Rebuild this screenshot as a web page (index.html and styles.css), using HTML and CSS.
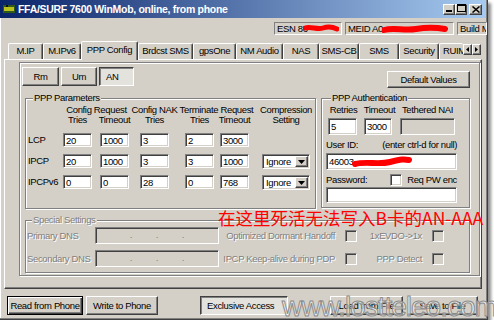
FILE: index.html
```html
<!DOCTYPE html>
<html lang="en">
<head>
  <meta charset="UTF-8" />
  <title>FFA/SURF 7600 WinMob - Service Programming</title>
  <link rel="stylesheet" href="styles.css">
</head>
<body>

<div class="window">
  <!-- Title bar -->
  <div class="titlebar">
    <svg class="app-icon" width="12" height="8" viewBox="0 0 12 8"><rect width="12" height="8" fill="#2d5a1a"/><rect x="1" y="2" width="10" height="4" fill="#b9c21c"/><rect x="3" y="0" width="2" height="2" fill="#111"/></svg>
    <span class="title">FFA/SURF 7600 WinMob, online, from phone</span>
    <div class="caption-btns">
      <span class="cbtn"><svg width="6" height="2"><rect width="6" height="2" fill="#000"/></svg></span>
      <span class="cbtn"><svg width="9" height="8" viewBox="0 0 9 8"><rect x="0.5" y="0.5" width="8" height="7" fill="none" stroke="#000"/><rect width="9" height="2" fill="#000"/></svg></span>
      <span class="cbtn close"><svg width="8" height="7" viewBox="0 0 8 7"><path d="M0.5 0.5L7.5 6.5M7.5 0.5L0.5 6.5" stroke="#000" stroke-width="1.5"/></svg></span>
    </div>
  </div>

  <!-- Phone info -->
  <div class="status">
    <span class="sbox esn">ESN 86
      <svg class="scribble" width="36" height="9" viewBox="0 0 36 9"><path d="M2 4C8 2 14 6 20 4S30 3 34 5" stroke="#f00" stroke-width="5" fill="none" stroke-linecap="round"/></svg>
    </span>
    <span class="sbox meid">MEID A0
      <svg class="scribble" width="66" height="10" viewBox="0 0 66 10"><path d="M2 6C12 3 22 7 34 5S52 3 63 5" stroke="#f00" stroke-width="6" fill="none" stroke-linecap="round"/></svg>
    </span>
    <span class="sbox build">Build M</span>
  </div>

  <!-- Tabs -->
  <div class="tabs">
    <span class="tab w35">M.IP</span>
    <span class="tab w38">M.IPv6</span>
    <span class="tab active">PPP Config</span>
    <span class="tab w55">Brdcst SMS</span>
    <span class="tab w43">gpsOne</span>
    <span class="tab w47">NM Audio</span>
    <span class="tab w36">NAS</span>
    <span class="tab w40">SMS-CB</span>
    <span class="tab w40">SMS</span>
    <span class="tab w40">Security</span>
    <span class="tab cut">RUIM</span>
    <span class="tab-scroll">
      <span class="arrow"><svg width="3" height="5"><path d="M3 0V5L0 2.5Z" fill="#000"/></svg></span>
      <span class="arrow"><svg width="3" height="5"><path d="M0 0V5L3 2.5Z" fill="#000"/></svg></span>
    </span>
  </div>

  <div class="panel">
    <div class="frame">
      <div class="top-row">
        <div class="modes">
          <button class="btn mode">Rm</button>
          <button class="btn mode">Um</button>
          <button class="btn mode down">AN</button>
        </div>
        <button class="btn defaults">Default Values</button>
      </div>

      <div class="groups">
        <fieldset class="group ppp-params">
          <legend>PPP Parameters</legend>
          <div class="param-grid">
            <span></span>
            <span class="hd span2 cfg">Config Request</span>
            <span class="hd">Config NAK</span>
            <span class="hd span2 term">Terminate Request</span>
            <span class="hd wide-hd">Compression</span>

            <span></span>
            <span class="hd">Tries</span>
            <span class="hd">Timeout</span>
            <span class="hd">Tries</span>
            <span class="hd">Tries</span>
            <span class="hd">Timeout</span>
            <span class="hd wide-hd">Setting</span>

            <span class="rowlabel">LCP</span>
            <input class="field" type="text" value="20">
            <input class="field" type="text" value="1000">
            <input class="field" type="text" value="3">
            <input class="field" type="text" value="2">
            <input class="field" type="text" value="3000">
            <span></span>

            <span class="rowlabel">IPCP</span>
            <input class="field" type="text" value="20">
            <input class="field" type="text" value="1000">
            <input class="field" type="text" value="3">
            <input class="field" type="text" value="3">
            <input class="field" type="text" value="1000">
            <span class="combo">Ignore<span class="combo-btn"><svg width="7" height="4"><path d="M0 0H7L3.5 4Z" fill="#000"/></svg></span></span>

            <span class="rowlabel">IPCPv6</span>
            <input class="field" type="text" value="0">
            <input class="field" type="text" value="0">
            <input class="field" type="text" value="28">
            <input class="field" type="text" value="0">
            <input class="field" type="text" value="768">
            <span class="combo">Ignore<span class="combo-btn"><svg width="7" height="4"><path d="M0 0H7L3.5 4Z" fill="#000"/></svg></span></span>
          </div>
        </fieldset>

        <fieldset class="group ppp-auth">
          <legend>PPP Authentication</legend>
          <div class="auth-grid">
            <span class="hd">Retries</span>
            <span class="hd">Timeout</span>
            <span class="hd">Tethered NAI</span>
            <input class="field retries" type="text" value="5">
            <input class="field timeout" type="text" value="3000">
            <input class="field nai" type="text" value="" disabled>
          </div>
          <div class="auth-line user-line">
            <span>User ID:</span>
            <span>(enter ctrl-d for null)</span>
          </div>
          <div class="user-box">
            <input class="field wide" type="text" value="46003">
            <svg class="scribble user-scribble" width="60" height="12" viewBox="0 0 60 12"><path d="M3 8C14 5 26 9 38 6S52 3 57 4" stroke="#f00" stroke-width="6" fill="none" stroke-linecap="round"/></svg>
          </div>
          <div class="auth-line pw-line">
            <span>Password:</span>
            <span class="chk-wrap"><span class="check"></span>Req PW enc</span>
          </div>
          <input class="field wide pw" type="password" value="">
        </fieldset>
      </div>

      <fieldset class="group special">
        <legend>Special Settings</legend>
        <div class="special-grid">
          <span class="dis">Primary DNS</span>
          <span class="field ip"><i>.</i><i>.</i><i>.</i></span>
          <span class="dis right">Optimized Dormant Handoff</span>
          <span class="check off"></span>
          <span class="dis right">1xEVDO-&gt;1x</span>
          <span class="check off"></span>

          <span class="dis">Secondary DNS</span>
          <span class="field ip"><i>.</i><i>.</i><i>.</i></span>
          <span class="dis right">IPCP Keep-alive during PDP</span>
          <span class="check off"></span>
          <span class="dis right">PPP Detect</span>
          <span class="check off"></span>
        </div>
      </fieldset>
    </div>
  </div>

  <div class="bottom">
    <button class="btn default read">Read from Phone</button>
    <button class="btn write">Write to Phone</button>
    <button class="btn down exclusive">Exclusive Access</button>
    <button class="btn load">Load from File</button>
    <button class="btn save">Save to File</button>
  </div>

  <div class="note">在这里死活无法写入B卡的AN-AAA</div>
  <div class="watermark">www.lostteleo.com</div>
</div>

</body>
</html>
```

FILE: styles.css
```css
* { box-sizing: border-box; }
body {
  margin: 0;
  background: #fff;
  font-family: "Liberation Sans", Arial, sans-serif;
  font-size: 9.5px;
  letter-spacing: -0.35px;
  color: #000;
}
.window {
  position: relative;
  width: 488px;
  height: 320px;
  background: #d4d0c8;
  box-shadow: inset -1px -1px #404040, inset -2px -2px #808080, inset 1px 0 #fff, 3px 3px 3px rgba(0,0,0,0.45);
}

/* title bar */
.titlebar {
  height: 18px;
  margin-right: 2px;
  display: flex;
  align-items: center;
  padding-left: 3px;
  background: linear-gradient(to right, #0a246a, #a6caf0);
  color: #fff;
  font-weight: bold;
}
.title {
  margin-left: 3px;
  font-size: 10.5px;
  letter-spacing: -0.3px;
}
.caption-btns {
  margin-left: auto;
  margin-right: 4px;
  display: flex;
}
.cbtn {
  width: 12px;
  height: 11px;
  display: flex;
  align-items: flex-end;
  justify-content: center;
  padding-bottom: 2px;
  background: #d4d0c8;
  border: 1px solid;
  border-color: #fff #404040 #404040 #fff;
  box-shadow: inset -1px -1px #808080;
}
.cbtn.close { margin-left: 2px; width: 13px; align-items: center; padding: 0; }

/* status boxes */
.status {
  display: flex;
  justify-content: flex-end;
  gap: 3px;
  height: 13px;
  margin-top: 4px;
  padding-right: 1px;
}
.sbox {
  position: relative;
  border: 1px solid;
  border-color: #808080 #fff #fff #808080;
  padding: 0 2px;
  line-height: 11px;
  white-space: nowrap;
  overflow: hidden;
}
.esn { width: 68px; }
.meid { width: 109px; }
.build { width: 30px; }
.scribble {
  position: absolute;
  top: 1px;
}
.esn .scribble { left: 28px; }
.meid .scribble { left: 36px; }

/* tabs */
.tabs {
  display: flex;
  align-items: flex-end;
  height: 18px;
  margin-top: 6px;
  padding-left: 8px;
}
.tab {
  height: 16px;
  line-height: 14px;
  text-align: center;
  white-space: nowrap;
  overflow: hidden;
  border-top: 1px solid #fff;
  border-left: 1px solid #fff;
  border-right: 1px solid #404040;
  box-shadow: inset -1px 0 #808080;
  border-radius: 2px 2px 0 0;
}
.tab.active {
  position: relative;
  z-index: 1;
  width: 57px;
  height: 19px;
  line-height: 16px;
  margin-bottom: -1px;
  background: #d4d0c8;
}
.w35 { width: 35px; }
.w36 { width: 36px; }
.w38 { width: 38px; }
.w40 { width: 40px; }
.w43 { width: 43px; }
.w47 { width: 47px; }
.w55 { width: 55px; }
.tab.cut {
  width: 24px;
  text-align: left;
  padding-left: 3px;
  border-right: none;
  box-shadow: none;
}
.tab-scroll {
  display: flex;
  align-self: flex-start;
  margin-top: 3px;
}
.arrow {
  width: 9px;
  height: 11px;
  display: flex;
  align-items: center;
  justify-content: center;
  border: 1px solid;
  border-color: #fff #404040 #404040 #fff;
  box-shadow: inset -1px -1px #808080;
}

/* page */
.panel {
  width: 478px;
  height: 230px;
  margin-left: 4px;
  padding: 2px 1px 0 14px;
  border: 1px solid;
  border-color: #fff #404040 #404040 #fff;
  box-shadow: inset -1px -1px #808080;
}
.frame {
  width: 461px;
  height: 214px;
  border: 1px solid #808080;
  box-shadow: inset 1px 1px #fff, 1px 1px #fff;
  padding-top: 4px;
}
.top-row {
  display: flex;
  justify-content: space-between;
  align-items: flex-start;
  height: 21px;
  padding: 0 9px 0 2px;
}
.modes { display: flex; gap: 2px; }

.btn {
  font: inherit;
  letter-spacing: inherit;
  color: #000;
  padding: 0;
  height: 19px;
  background: #d4d0c8;
  border: 1px solid;
  border-color: #fff #404040 #404040 #fff;
  box-shadow: inset -1px -1px #808080;
  white-space: nowrap;
}
.btn.down {
  border-color: #404040 #fff #fff #404040;
  box-shadow: inset 1px 1px #808080;
  background: #e4e2dd;
  text-align: left;
  padding-left: 6px;
}
.mode { width: 36px; }
.mode:first-child { width: 37px; }
.mode.down { width: 35px; }
.defaults { width: 83px; height: 17px; margin-top: 4px; }

/* group boxes */
.groups {
  display: flex;
  gap: 5px;
  margin-top: 4px;
  padding-left: 5px;
}
.group {
  margin: 0;
  min-width: 0;
  border: 1px solid #808080;
  box-shadow: inset 1px 1px #fff, 1px 1px #fff;
}
.group legend {
  padding: 0 1px;
  margin-left: 5px;
  line-height: 12px;
  background: #d4d0c8;
}
.ppp-params {
  width: 291px;
  height: 117px;
  padding: 1px 3px 0 2px;
}
.param-grid {
  display: grid;
  grid-template-columns: 35px 37px 40px 45px 35px 42px 50px;
  grid-template-rows: 10px 18px 21px 21px 21px;
  align-items: start;
}
.hd {
  width: 29px;
  display: flex;
  justify-content: center;
  white-space: nowrap;
  line-height: 10px;
}
.hd.span2 { grid-column: span 2; width: auto; }
.hd.cfg { padding-right: 10px; }
.hd.term { padding-right: 14px; }
.hd.wide-hd { width: 48px; }
.rowlabel { line-height: 14px; }

.field {
  font: inherit;
  letter-spacing: inherit;
  color: #000;
  background: #fff;
  padding: 0 2px;
  margin: 0;
  outline: none;
  border: 1px solid;
  border-color: #808080 #fff #fff #808080;
  box-shadow: inset 1px 1px #404040, inset -1px -1px #d4d0c8;
}
.param-grid .field { width: 29px; height: 14px; }

.combo {
  display: flex;
  align-items: center;
  justify-content: space-between;
  width: 48px;
  height: 15px;
  padding: 0 1px 0 3px;
  background: #fff;
  border: 1px solid;
  border-color: #808080 #fff #fff #808080;
  box-shadow: inset 1px 1px #404040, inset -1px -1px #d4d0c8;
}
.combo-btn {
  width: 13px;
  height: 11px;
  display: flex;
  align-items: center;
  justify-content: center;
  background: #d4d0c8;
  border: 1px solid;
  border-color: #fff #404040 #404040 #fff;
  box-shadow: inset -1px -1px #808080;
}

.ppp-auth {
  width: 149px;
  height: 116px;
  padding: 1px 12px 0 4px;
}
.auth-grid {
  display: grid;
  grid-template-columns: 35px 37px 59px;
  grid-template-rows: 13px 17px;
}
.auth-grid .hd { width: auto; }
.auth-grid .field { height: 17px; }
.retries { width: 29px; margin-left: 2px; }
.timeout { width: 28px; margin-left: 3px; }
.nai { width: 55px; margin-left: 2px; background: #d4d0c8; }
.auth-line {
  display: flex;
  justify-content: space-between;
  align-items: center;
  line-height: 12px;
}
.user-line { margin-top: 4px; }
.user-box { position: relative; margin-top: 2px; }
.field.wide { width: 131px; height: 17px; }
.user-scribble { left: 26px; top: 3px; }
.pw-line { margin-top: 4px; }
.chk-wrap { display: flex; align-items: center; gap: 5px; }
.field.pw { height: 16px; margin-top: 1px; }

.check {
  display: inline-block;
  width: 12px;
  height: 12px;
  background: #fff;
  border: 1px solid;
  border-color: #808080 #fff #fff #808080;
  box-shadow: inset 1px 1px #404040, inset -1px -1px #d4d0c8;
}
.check.off { background: #d4d0c8; justify-self: end; }

.special {
  width: 445px;
  height: 59px;
  margin: 5px 0 0 5px;
  padding: 1px 0 0 1px;
}
.special legend, .dis {
  color: #808080;
  text-shadow: 1px 1px 0 #fff;
}
.special-grid {
  display: grid;
  grid-template-columns: 68px 124px 116px 22px 65px 22px;
  grid-template-rows: 17px 17px;
  row-gap: 6px;
  align-items: center;
}
.dis { white-space: nowrap; }
.right { text-align: right; }
.field.ip {
  height: 17px;
  background: #d4d0c8;
  display: flex;
  justify-content: space-around;
  padding: 0 22px;
  color: #808080;
  line-height: 13px;
}
.field.ip i { font-style: normal; }

/* bottom buttons */
.bottom {
  display: flex;
  margin: 7px 0 0 7px;
}
.read { width: 76px; }
.btn.default {
  border: 1px solid #000;
  box-shadow: inset 1px 1px #fff, inset -1px -1px #404040, inset -2px -2px #808080;
}
.write { width: 72px; margin-left: 3px; }
.exclusive { width: 88px; margin-left: 42px; text-align: center; padding-left: 0; }
.load { width: 73px; margin-left: 42px; }
.save { width: 71px; margin-left: 4px; }

/* annotation over the dialog */
.note {
  position: absolute;
  left: 218px;
  top: 207px;
  font-family: "Noto Sans CJK SC", sans-serif;
  font-size: 17.5px;
  line-height: 22px;
  color: #f00;
  white-space: nowrap;
  letter-spacing: 0;
}
.watermark {
  position: absolute;
  left: 282px;
  top: 291px;
  font-size: 28px;
  letter-spacing: -1px;
  color: rgba(255,255,255,0.5);
  -webkit-text-stroke: 1px #8c8c8c;
  white-space: nowrap;
}
```
